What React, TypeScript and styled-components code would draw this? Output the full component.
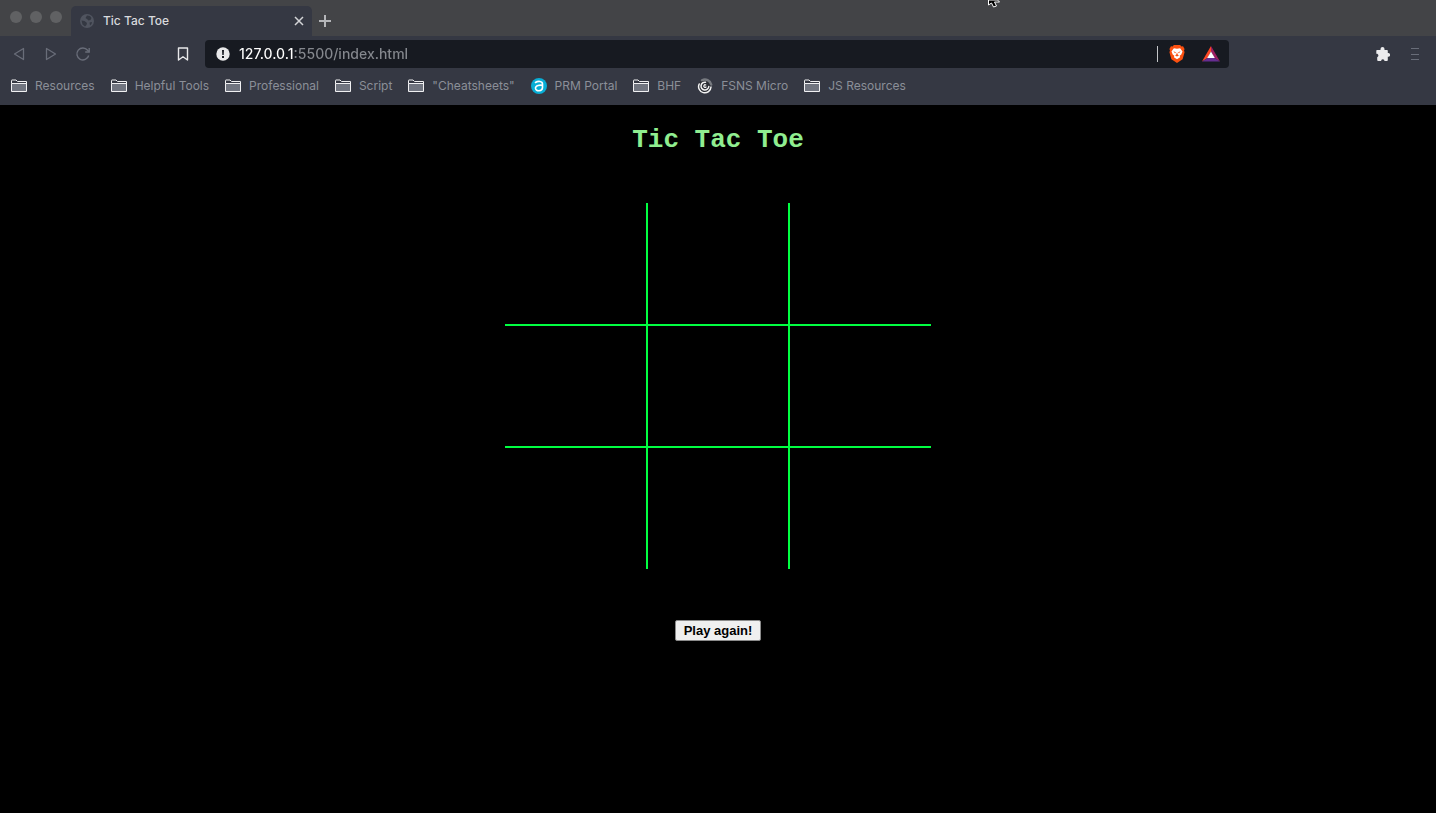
import React from "react";
import styled, { createGlobalStyle } from "styled-components";

const GlobalStyle = createGlobalStyle`
  * { box-sizing: border-box; }
  html, body { margin: 0; background: #000; }
  body { font-family: Inter, "Liberation Sans", sans-serif; }
`;

const Window = styled.div`
  position: relative;
  min-height: 100vh;
  background: #000;
`;

const Chrome = styled.header`
  background: #353843;
  color: #8b8f98;
`;

const TabStrip = styled.div`
  display: flex;
  align-items: flex-end;
  height: 36px;
  padding-left: 10px;
  background: #434447;
`;

const WindowControls = styled.div`
  display: flex;
  gap: 8px;
  width: 61px;
  padding-bottom: 13px;
`;

const ControlDot = styled.button`
  width: 12px;
  height: 12px;
  padding: 0;
  border: 0;
  border-radius: 50%;
  background: #606163;
`;

const Tab = styled.div`
  display: flex;
  align-items: center;
  width: 241px;
  height: 30px;
  padding: 0 5px 0 8px;
  border-radius: 5px 5px 0 0;
  background: #353843;
`;

const TabTitle = styled.span`
  flex: 1;
  padding-left: 8px;
  color: #d9dadd;
  font-size: 12px;
  font-weight: 500;
  line-height: 16px;
`;

const IconButton = styled.button<{ $width?: number; $color?: string }>`
  display: flex;
  align-items: center;
  justify-content: center;
  flex: none;
  width: ${(p) => p.$width ?? 32}px;
  height: 30px;
  padding: 0;
  border: 0;
  background: none;
  color: ${(p) => p.$color ?? "#696d79"};
`;

const Toolbar = styled.div`
  display: flex;
  align-items: center;
  height: 36px;
  padding: 0 5px 0 3px;
`;

const NavButtons = styled.nav`
  display: flex;
  width: 164px;
`;

const AddressBar = styled.label`
  display: flex;
  flex: 1;
  align-items: center;
  height: 28px;
  margin: 0 138px 0 6px;
  padding: 0 1px 0 11px;
  border-radius: 4px;
  background: #171a21;
`;

const AddressInput = styled.input`
  flex: 1;
  min-width: 0;
  height: 20px;
  margin-left: 9px;
  padding: 0;
  border: 0;
  outline: 0;
  background: linear-gradient(90deg, #fff 55px, #85888e 55px);
  background-clip: text;
  -webkit-background-clip: text;
  color: transparent;
  font-family: inherit;
  font-size: 14px;
  font-weight: 500;
  line-height: 20px;
`;

const Divider = styled.span`
  width: 1px;
  height: 16px;
  margin-right: 2px;
  background: #c3c5c8;
`;

const BookmarksBar = styled.nav`
  display: flex;
  align-items: center;
  gap: 16px;
  height: 33px;
  padding: 0 11px 6px;
`;

const Bookmark = styled.a`
  display: flex;
  align-items: center;
  gap: 8px;
  color: #8b8f98;
  font-size: 12px;
  line-height: 16px;
  text-decoration: none;
  white-space: nowrap;
`;

const Page = styled.main`
  display: flex;
  flex-direction: column;
  align-items: center;
`;

const Heading = styled.h1`
  margin: 20px 0 48px;
  color: #90ee90;
  font-family: "Courier New", "Liberation Mono", monospace;
  font-size: 26px;
  font-weight: 700;
  line-height: 30px;
`;

const Board = styled.div`
  display: grid;
  grid-template-columns: 143px 142px 141px;
  grid-template-rows: 123px 122px 121px;
`;

const Cell = styled.button<{ $right: boolean; $bottom: boolean }>`
  padding: 0;
  border: 0 solid #00ff41;
  border-right-width: ${(p) => (p.$right ? 2 : 0)}px;
  border-bottom-width: ${(p) => (p.$bottom ? 2 : 0)}px;
  background: none;
`;

const PlayButton = styled.button`
  height: 21px;
  margin-top: 51px;
  padding: 0 8px;
  border: 1px solid #8a8a8a;
  border-radius: 2px;
  background: #efefef;
  color: #000;
  font-family: "Liberation Sans", Arial, sans-serif;
  font-size: 13px;
  font-weight: 700;
  line-height: 18px;
`;

const Pointer = styled.svg`
  position: absolute;
  top: 0;
  left: 987px;
`;

const Globe = () => (
  <svg width="16" height="16" viewBox="0 0 16 16" aria-hidden="true">
    <circle cx="8" cy="8" r="7" fill="#50545f" />
    <path
      d="M8 2.500 11 3l1.500 2-1 2-2 .5L8 6 6.500 5ZM2.500 7.500l3 .5 2.500 2-.5 2L6 13.500 3.500 11.500ZM10.500 9.500l2.500-.5-.5 2-1.500 1.500Z"
      fill="#343842"
    />
  </svg>
);

const Triangle = ({ flip = false }: { flip?: boolean }) => (
  <svg width="14" height="14" viewBox="0 0 14 14" aria-hidden="true">
    <path
      d={flip ? "M2.500 1.500v11L11.500 7Z" : "M11.500 1.500v11L2.500 7Z"}
      fill="none"
      stroke="currentColor"
      strokeWidth="1.300"
      strokeLinejoin="round"
    />
  </svg>
);

const Reload = () => (
  <svg width="16" height="16" viewBox="0 0 16 16" fill="none" stroke="currentColor" strokeWidth="1.400" aria-hidden="true">
    <path d="M13.700 9.500A6 6 0 1 1 12.600 4.200L14 5.500" />
    <path d="M14.200 2v4h-4" />
  </svg>
);

const Folder = () => (
  <svg width="16" height="14" viewBox="0 0 16 14" aria-hidden="true">
    <path d="M.5 4.500h15v8H.5Z" fill="#70747f" />
    <path d="M.5 4.500V1.500q0-.5.5-.5h4l1.500 1.500h9v10H.5V4.500h15" fill="none" stroke="#f0f0f2" />
  </svg>
);

const PortalLogo = () => (
  <svg width="16" height="16" viewBox="0 0 16 16" aria-hidden="true">
    <circle cx="8" cy="8" r="8" fill="#08aed6" />
    <path
      d="M4.500 4.500C7 2.800 11.500 3 11.500 6v3.500c0 4-6.800 4.300-7 .8-.2-3 4.800-3.600 7-2.800"
      fill="none"
      stroke="#fff"
      strokeWidth="1.600"
      strokeLinecap="round"
    />
  </svg>
);

const SwirlLogo = () => (
  <svg width="16" height="16" viewBox="0 0 16 16" fill="none" strokeLinecap="round" aria-hidden="true">
    <circle cx="8" cy="8" r="6.500" fill="#2b2d34" />
    <path d="M5 2.300A6.500 6.500 0 0 1 14.200 6.500" stroke="#777a80" strokeWidth="2.400" />
    <path d="M2.200 6A6.200 6.200 0 1 0 14 9" stroke="#f4f4f4" strokeWidth="1.500" />
    <path d="M8.500 4.200A3.900 3.900 0 1 0 11.800 8.500" stroke="#f4f4f4" strokeWidth="1.500" />
    <path d="M8.800 7A1.300 1.300 0 1 0 9 9" stroke="#f4f4f4" strokeWidth="1.200" />
  </svg>
);

const BraveLion = () => (
  <svg width="16" height="18" viewBox="0 0 18 20" aria-hidden="true">
    <path d="M5.500 0h7l1.500 1.500 1.800-.1 1.700 3.100-.6 1.500.6 2-2.200 8L9 20l-6.300-4L.5 8l.6-2L.5 4.500l1.700-3.100L4 1.500Z" fill="#fb5010" />
    <path d="m5.500 3.500 3.500.7 3.500-.7 2.700 3.700-1.400 3.500-1.800 1.200.5 1.800L9 16l-3.500-2.300.5-1.800-1.800-1.200L2.800 7.200Z" fill="#fff" />
    <path d="m4.800 7 3 .9-.9 1.300ZM13.200 7l-3 .9.9 1.300ZM9 8l.8 2.500 1.400 1.200L9 12.800l-2.200-1.100 1.400-1.200Z" fill="#fb5010" />
  </svg>
);

const RewardsTriangle = () => (
  <svg width="18" height="16" viewBox="0 0 18 16" aria-hidden="true">
    <path d="M9 0 0 15.500 5.500 12 9 5.500Z" fill="#ff4724" />
    <path d="m9 0 9 15.500-5.500-3.500L9 5.500Z" fill="#9e1f63" />
    <path d="M0 15.500h18L12.500 12h-7Z" fill="#662d91" />
    <path d="m9 5.500 3.800 6.500H5.200Z" fill="#fff" />
  </svg>
);

const Puzzle = () => (
  <svg width="14" height="14" viewBox="0 0 14 14" fill="currentColor" aria-hidden="true">
    <path d="M1 3h3.500V2a2 2 0 0 1 4 0v1H11q.8 0 .8.800V6h.4a1.900 1.900 0 0 1 0 3.800h-.4V13q0 1-.8 1H8.500a1.700 1.700 0 0 0-3.400 0H2.200q-1 0-1-1v-2.800A1.800 1.800 0 0 0 1.200 6.800H.3V3.800Q.3 3 1 3Z" />
  </svg>
);

const bookmarks = [
  { name: "Resources", icon: <Folder /> },
  { name: "Helpful Tools", icon: <Folder /> },
  { name: "Professional", icon: <Folder /> },
  { name: "Script", icon: <Folder /> },
  { name: '"Cheatsheets"', icon: <Folder /> },
  { name: "PRM Portal", icon: <PortalLogo /> },
  { name: "BHF", icon: <Folder /> },
  { name: "FSNS Micro", icon: <SwirlLogo /> },
  { name: "JS Resources", icon: <Folder /> },
];

export default function App() {
  return (
    <Window>
      <GlobalStyle />
      <Chrome>
        <TabStrip>
          <WindowControls>
            <ControlDot aria-label="Close window" />
            <ControlDot aria-label="Minimize window" />
            <ControlDot aria-label="Zoom window" />
          </WindowControls>
          <Tab>
            <Globe />
            <TabTitle>Tic Tac Toe</TabTitle>
            <IconButton $width={16} $color="#d4d5d8" aria-label="Close tab">
              <svg width="10" height="10" viewBox="0 0 10 10" stroke="currentColor" strokeWidth="1.500">
                <path d="m1 1 8 8M9 1 1 9" />
              </svg>
            </IconButton>
          </Tab>
          <IconButton $width={26} $color="#b5b6b9" aria-label="New tab">
            <svg width="12" height="12" viewBox="0 0 12 12" stroke="currentColor" strokeWidth="2">
              <path d="M6 0v12M0 6h12" />
            </svg>
          </IconButton>
        </TabStrip>
        <Toolbar>
          <NavButtons aria-label="Navigation">
            <IconButton aria-label="Back"><Triangle /></IconButton>
            <IconButton aria-label="Forward"><Triangle flip /></IconButton>
            <IconButton aria-label="Reload"><Reload /></IconButton>
          </NavButtons>
          <IconButton $color="#e8e8ea" aria-label="Bookmark this page">
            <svg width="12" height="14" viewBox="0 0 12 14" fill="none" stroke="currentColor" strokeWidth="1.400">
              <path d="M1.500 1h9v12L6 9.800 1.500 13Z" strokeLinejoin="round" />
            </svg>
          </IconButton>
          <AddressBar>
            <svg width="14" height="14" viewBox="0 0 14 14" aria-hidden="true">
              <circle cx="7" cy="7" r="6.700" fill="#e9e9ea" />
              <path d="M6 3h2l-.3 5H6.300ZM6 9h2v2H6Z" fill="#171a21" />
            </svg>
            <AddressInput aria-label="Address" defaultValue="127.0.0.1:5500/index.html" spellCheck={false} />
            <Divider />
            <IconButton $width={34} aria-label="Shields"><BraveLion /></IconButton>
            <IconButton $width={34} aria-label="Rewards"><RewardsTriangle /></IconButton>
          </AddressBar>
          <IconButton $color="#ececee" aria-label="Extensions"><Puzzle /></IconButton>
          <IconButton aria-label="Menu">
            <svg width="10" height="14" viewBox="0 0 10 14" stroke="currentColor">
              <path d="M1 1.500h8M1 7.500h8M1 12.500h8" />
            </svg>
          </IconButton>
        </Toolbar>
        <BookmarksBar aria-label="Bookmarks">
          {bookmarks.map((b) => (
            <Bookmark key={b.name} href="#">
              {b.icon}
              {b.name}
            </Bookmark>
          ))}
        </BookmarksBar>
      </Chrome>
      <Page>
        <Heading>Tic Tac Toe</Heading>
        <Board>
          {Array.from({ length: 9 }, (_, i) => (
            <Cell key={i} $right={i % 3 < 2} $bottom={i < 6} aria-label={`Square ${i + 1}`} />
          ))}
        </Board>
        <PlayButton>Play again!</PlayButton>
      </Page>
      <Pointer width="14" height="8" viewBox="0 0 14 8" aria-hidden="true">
        <path d="M1.500 0v5l3-2 2 4 3-1-2-4h5l-2-2Z" fill="#000" stroke="#fff" />
      </Pointer>
    </Window>
  );
}
